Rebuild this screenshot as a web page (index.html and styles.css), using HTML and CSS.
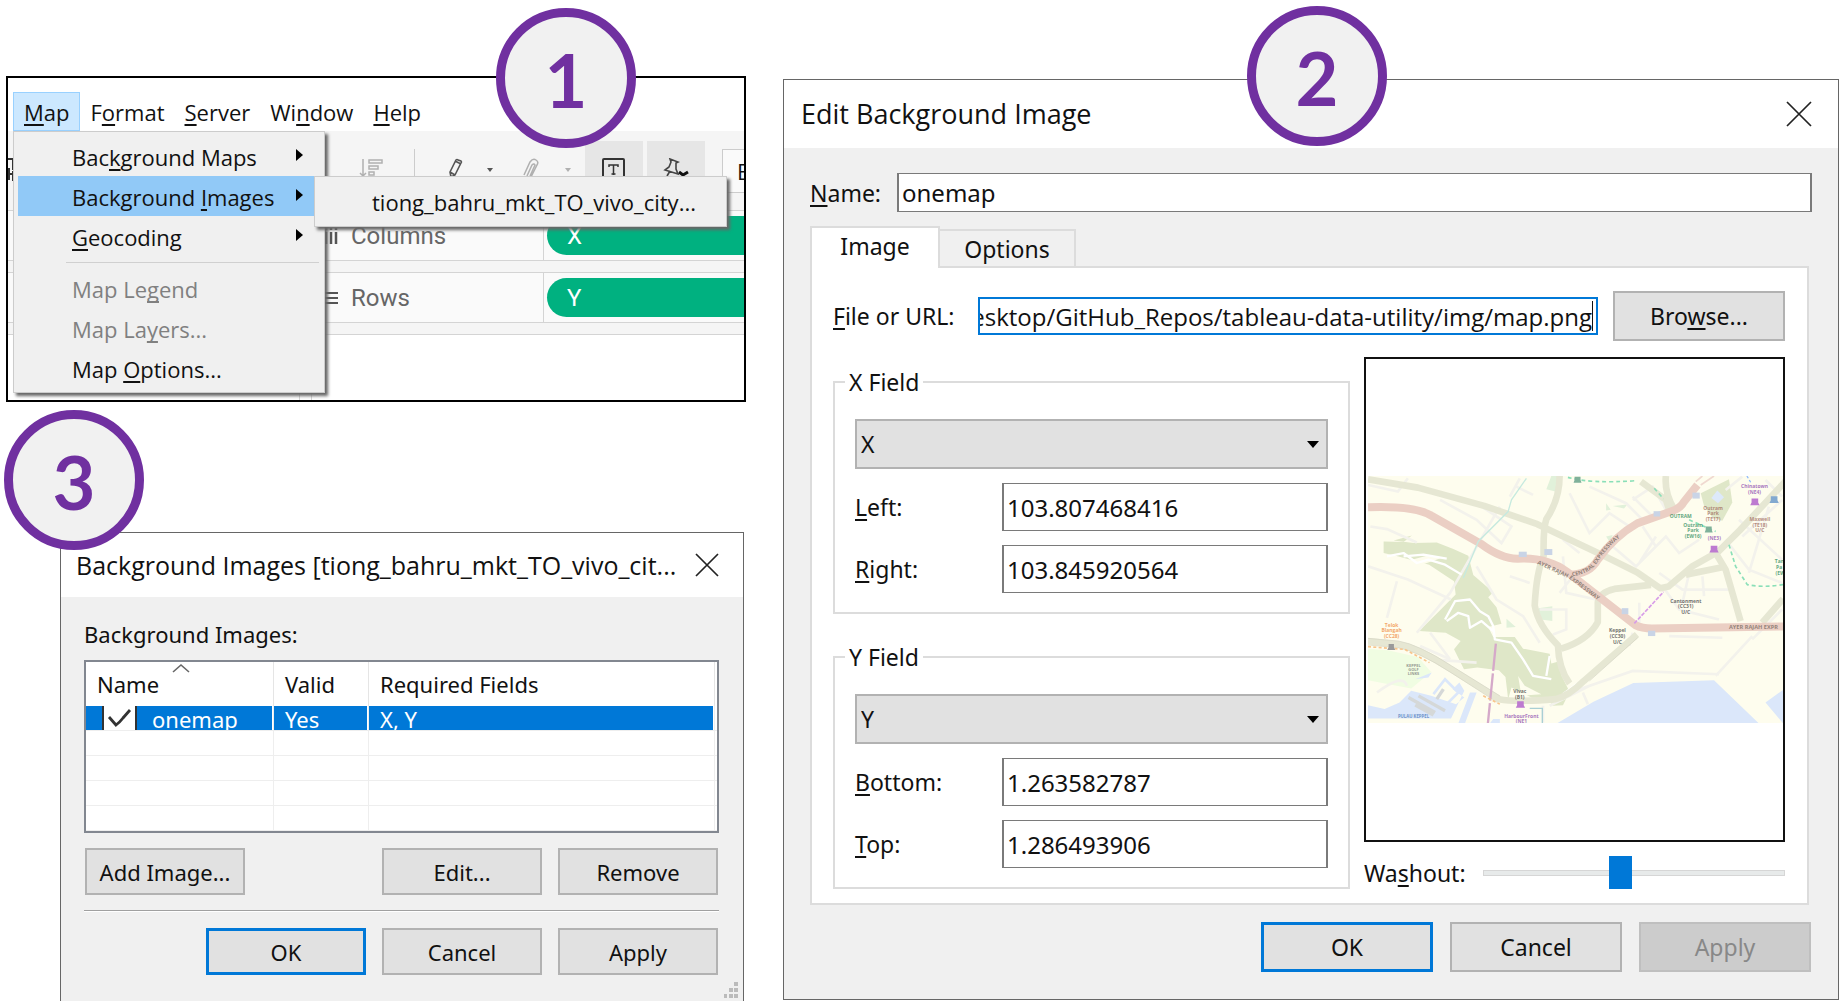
FILE: index.html
```
<!DOCTYPE html>
<html lang="en">
<head>
<meta charset="utf-8">
<title>Background image setup</title>
<link rel="stylesheet" href="styles.css">
</head>
<body>
<main class="page">
  <div class="left">
    <section class="step">
      <div class="app">
        <nav class="menubar">
          <button class="menubar-item open"><u>M</u>ap</button>
          <button class="menubar-item">F<u>o</u>rmat</button>
          <button class="menubar-item"><u>S</u>erver</button>
          <button class="menubar-item">Wi<u>n</u>dow</button>
          <button class="menubar-item"><u>H</u>elp</button>
        </nav>
        <div class="toolbar">
          <svg class="tool-edge" width="6" height="24" viewBox="0 0 6 24"><path d="M0 1h5v11M0 16h5M5 13v10M1 10v12" fill="none" stroke="#333" stroke-width="2"/></svg>
          <button class="tool tool-sort" aria-label="Sort"><svg width="26" height="24" viewBox="0 0 26 24" fill="none" stroke="#b0b0b0" stroke-width="1.5"><path d="M5 1v17M2 15l3 3 3-3"/><rect x="11" y="2" width="13" height="3"/><rect x="11" y="8" width="9" height="3"/><rect x="11" y="14" width="5" height="3"/></svg></button>
          <span class="tool-divider"></span>
          <button class="tool tool-pen" aria-label="Highlight"><svg width="18" height="24" viewBox="0 0 18 24" fill="none" stroke="#555" stroke-width="1.6"><path d="M3 14L9 2q1-1 2 0l3 1q1 1 0 2L8 17l-4 2zM3 14l5 3M8 3l6 3"/></svg><svg width="8" height="6" viewBox="0 0 8 6"><path d="M1 1h6L4 5z" fill="#555"/></svg></button>
          <button class="tool tool-clip" aria-label="Group"><svg width="20" height="24" viewBox="0 0 20 24" fill="none" stroke="#b0b0b0" stroke-width="1.5"><path d="M3 17L9 4q3-4 6-2t1 5l-6 12M6 18l5-11q2-2 3 0l-5 11"/></svg><svg width="8" height="6" viewBox="0 0 8 6"><path d="M1 1h6L4 5z" fill="#b0b0b0"/></svg></button>
          <button class="tool pressed" aria-label="Show labels"><svg width="24" height="24" viewBox="0 0 24 24" fill="none" stroke="#333"><rect x="1" y="1" width="21" height="21" rx="1" stroke-width="2"/><path d="M7 9V7h9v2M11.500 7v10M9.500 16h4" stroke-width="1.5"/></svg></button>
          <button class="tool pressed" aria-label="Pin axes"><svg width="26" height="24" viewBox="0 0 26 24" fill="none" stroke="#444" stroke-width="1.6"><path d="M7 1l8 3-2 1v6l2 5-13-4 4-3 2-5zM7 13l-3 5"/><path d="M16 14l4 3 5-3" stroke="#111" stroke-width="3"/></svg></button>
          <button class="fit">E</button>
        </div>
        <div class="shelf"><div class="shelf-name"><svg width="14" height="16" viewBox="0 0 14 16"><path d="M2 4v12M7 4v12M12 4v12M2 0v2M7 0v2M12 0v2" stroke="#555" stroke-width="2.500"/></svg>Columns</div><div class="pill">X</div></div>
        <div class="shelf"><div class="shelf-name"><svg width="14" height="16" viewBox="0 0 14 16"><path d="M0 3h14M0 8h14M0 13h14" stroke="#555" stroke-width="2"/></svg>Rows</div><div class="pill">Y</div></div>
        <div class="sheet"><div class="side"></div><div class="canvas"></div></div>
      </div>
      <div class="menu">
        <button class="menu-item">Bac<u>k</u>ground Maps<i class="arrow"></i></button>
        <button class="menu-item current">Background <u>I</u>mages<i class="arrow"></i></button>
        <button class="menu-item"><u>G</u>eocoding<i class="arrow"></i></button>
        <hr class="menu-line">
        <button class="menu-item" disabled>Map Le<u>g</u>end</button>
        <button class="menu-item" disabled>Map La<u>y</u>ers...</button>
        <button class="menu-item">Map <u>O</u>ptions...</button>
      </div>
      <div class="submenu"><button class="submenu-item">tiong_bahru_mkt_TO_vivo_city...</button></div>
      <div class="badge badge-one">1</div>
    </section>

    <section class="step list-step">
      <div class="dialog">
        <header class="titlebar small-title">
          <h2>Background Images [tiong_bahru_mkt_TO_vivo_cit...</h2>
          <button class="close" aria-label="Close"><svg width="24" height="24" viewBox="0 0 24 24"><path d="M1 1l22 22M23 1L1 23" stroke="#222" stroke-width="1.7"/></svg></button>
        </header>
        <div class="list-body">
          <p class="list-label" id="list-label">Background Images:</p>
          <table class="images" aria-labelledby="list-label">
            <colgroup><col class="col-name"><col class="col-valid"><col><col class="col-end"></colgroup>
            <thead><tr><th>Name<svg class="sort-mark" width="18" height="10" viewBox="0 0 18 10"><path d="M1 9l8-7 8 7" fill="none" stroke="#666" stroke-width="1.6"/></svg></th><th>Valid</th><th>Required Fields</th><th></th></tr></thead>
            <tbody>
              <tr class="selected"><td><div class="cell name-cell"><label class="tick"><input type="checkbox" checked aria-label="onemap"><svg width="26" height="20" viewBox="0 0 26 20"><path d="M2 9l7 8q4-3 7-7l7-8" fill="none" stroke="#333" stroke-width="2.800"/></svg></label>onemap</div></td><td><div class="cell">Yes</div></td><td><div class="cell">X, Y</div></td><td></td></tr>
              <tr><td></td><td></td><td></td><td></td></tr>
              <tr><td></td><td></td><td></td><td></td></tr>
              <tr><td></td><td></td><td></td><td></td></tr>
              <tr><td></td><td></td><td></td><td></td></tr>
            </tbody>
          </table>
          <div class="actions list-actions">
            <button class="btn first">Add Image...</button>
            <button class="btn">Edit...</button>
            <button class="btn">Remove</button>
          </div>
          <hr class="rule">
          <div class="actions">
            <button class="btn default">OK</button>
            <button class="btn">Cancel</button>
            <button class="btn">Apply</button>
          </div>
        </div>
        <svg class="grip" width="15" height="16" viewBox="0 0 15 16"><path d="M10 0h4v4h-4zM10 6h4v4h-4zM10 12h4v4h-4zM5 6h4v4H5zM5 12h4v4H5zM0 12h3v4H0z" fill="#bbb"/></svg>
      </div>
      <div class="badge badge-three">3</div>
    </section>
  </div>

  <section class="step right">
    <div class="dialog edit">
      <header class="titlebar">
        <h1>Edit Background Image</h1>
        <button class="close" aria-label="Close"><svg width="26" height="26" viewBox="0 0 26 26"><path d="M1 1l24 24M25 1L1 25" stroke="#222" stroke-width="1.7"/></svg></button>
      </header>
      <div class="edit-body">
        <div class="name-row"><label for="name"><u>N</u>ame:</label><input class="text" id="name" value="onemap"></div>
        <div class="tabs" role="tablist">
          <button class="tab active" role="tab" aria-selected="true">Image</button>
          <button class="tab" role="tab" aria-selected="false">Options</button>
        </div>
        <div class="panel">
          <div class="file-row">
            <label for="file"><u>F</u>ile or URL:</label>
            <input class="text path" id="file" dir="rtl" value="Desktop/GitHub_Repos/tableau-data-utility/img/map.png">
            <button class="btn browse">Bro<u>w</u>se...</button>
          </div>
          <div class="settings">
            <div class="fields">
              <fieldset class="group">
                <legend>X Field</legend>
                <select class="combo" aria-label="X Field"><option>X</option></select>
                <label for="l"><u>L</u>eft:</label><input class="text" id="l" value="103.807468416">
                <label for="r"><u>R</u>ight:</label><input class="text" id="r" value="103.845920564">
              </fieldset>
              <fieldset class="group">
                <legend>Y Field</legend>
                <select class="combo" aria-label="Y Field"><option>Y</option></select>
                <label for="b"><u>B</u>ottom:</label><input class="text" id="b" value="1.263582787">
                <label for="t"><u>T</u>op:</label><input class="text" id="t" value="1.286493906">
              </fieldset>
            </div>
            <div class="look">
              <div class="preview">
                <svg class="map" viewBox="53 48 1250 745" role="img" aria-label="Map preview">
                  <path fill="#fefdee" d="M53 48h1250v745H53z"/>
                  <!-- golf course and small parks -->
                  <path fill="#f0fde2" d="M53 568l60 5 90 20 40 45-60 50-130-25z"/>
                  <path fill="#e1f1da" d="M590 88l15-40h20l-8 47zM566 446l42-6v45l-35-5zM470 478l28 25-28 2zM770 130l14 20-14 2zM790 138l44-4-10 12zM770 230l20-4-10 20z"/>
                  <!-- ridge parks -->
                  <path fill="#dfe7c8" d="M130 242l60 8 70-2 50 20 45 20 15 58 60 52-15 15 25 30 15 50-40 10 15 30 65 0 25 35 80 15 5 30 35-10-5 45 25 50-20 40-30 2-15-20-50-5-60-30-10 35-8-67-20-20-65-8-40 5-30-60 20-25-45-25-80-5 60-60 50-50-5-40-75-50-95-25-42-10 0-35 60 2 25-20z"/>
                  <path fill="#dfe7c8" d="M1055 100l85-42 10 70-30 55-30-10-25-35z"/>
                  <path fill="#dde9fa" d="M1105 92l20 20-18 18-20-16z"/>
                  <path fill="#fefdee" d="M185 300l45-12 50 5-65 22zM505 650l20 30 50 25-60 5z"/>
                  <!-- sea and docks -->
                  <path fill="#dbe7fa" d="M622 793l110-65 120-57 243-8 135 130zM1250 730l53-38v101zM53 738l50 12 45-20 35-35 60 15 75 25 25-20-35-25 20-20 15 25-40 83H53zM360 700h20l-35 93h-20zM430 780h20v13h-30zM195 660l50-20-10 15z"/>
                  <path fill="none" stroke="#dbe7fa" stroke-width="8" d="M250 705l35-45 40 40-35 35"/>
                  <path fill="none" stroke="#d5d8d8" stroke-width="10" d="M175 715l80 45M205 710l80 45M195 738l55 30M260 720l20-30"/>
                  <!-- minor streets -->
                  <g fill="none" stroke="#f3f2ec" stroke-width="8">
                    <path d="M53 75l90 20 30-40M270 120l110 60 75 70 30-50-90-60M60 200l50 8 90 40M53 320l120 40 130 60M140 365l-30 110M480 110l30-55M500 80l50 25M660 100l60 120 60-60 60 40M720 80l110 50 60 60M850 120l60-40 40 70M830 130l60 60M850 110l60 60M640 240l50 40M640 290l10 110 90 20M630 400l40-50M570 450l80 0v60l-40 15M480 350l60 20M380 320l60 100 80 50 50 80M790 260l70 60 90-90 40 50 60-40M880 200l40 60M870 310l50-80M930 340l70 50 150 0M940 380l50 70 120 30M960 530l160 5M840 560l10-40M1130 240l70 90 100 40M1170 180l130 120M1180 230l120-110M1200 340l60-200M1130 90l50-40M1250 60l50 50M1210 540l90-90M1100 650l110-120M690 690l160-55 260 10M600 740l120-60M580 740v50M700 700l15 35M240 520l60 80M210 560l90 40M80 700q80-60 90-20M240 600l140 10M870 430v60M1020 340l-20 90M1060 350l5 60M200 520l100-120 150-260"/>
                  </g>
                  <g fill="none" stroke="#fff" stroke-width="7" stroke-linejoin="round">
                    <path d="M110 290l50-10 40 30 35-10 50 15 50 30M160 290l60-5 70 12M285 480l30-55 45-5 30 35 25 15 15 30 5 40 50 10 35 50 30 50 55 10M290 485l35-25 30 10 5 35 35-20 35 30M640 705l75-55M600 590l-10 60"/>
                  </g>
                  <!-- main roads -->
                  <g fill="none" stroke="#e6e7d3" stroke-width="20" stroke-linejoin="round">
                    <path d="M53 58l150 25 200 55 160 55 200 95 100 50 70 48 25-5 70-60 80-45 65-65 140-150"/>
                    <path d="M630 48q0 70-40 130-10 30-8 110-22 50-27 150 10 60 70 120 2 70 35 115M635 568q80-25 110-80v-60q5-30 50-40l110-12M1100 280l30 50 45 155M1010 345l110-22M875 65l75 55 10 30M950 48q-5 50 25 100M1240 490l63-72"/>
                    <path d="M53 545l90 10q60 10 160 75l145 90q50 10 170 0 40-10 85-55l160-140"/>
                  </g>
                  <path fill="none" stroke="#d4d5c4" stroke-width="2" d="M53 537l92 8q60 10 160 75l145 90M53 557l90 8q60 10 160 75l140 90M720 665l145-130"/>
                  <!-- expressways -->
                  <g fill="none" stroke="#ebcfc4" stroke-width="24">
                    <path d="M53 142q140-5 190 25l150 85q60 45 110 45 90-5 150 40l205 160q20 10 50 10l395-6"/>
                    <path d="M660 345q60 0 85-45 50-70 120-110l100-35q30-10 40-30l40-50"/>
                  </g>
                  <path fill="none" stroke="#f0d9d0" stroke-width="5" d="M1040 65l20-17M1055 75l40-27"/>
                  <!-- transit lines -->
                  <g fill="none" stroke-width="5">
                    <path stroke="#c6eadf" d="M530 55l-45 65-10 35-90 90-45 110" stroke-width="4"/>
                    <path stroke="#8adfb8" stroke-dasharray="12 9" d="M655 52q70 20 205 10M915 85l28 32M1140 255l20 65 35 55q50 10 108 0M1020 180l80 35"/>
                    <path stroke="#d79be8" stroke-dasharray="12 4" d="M855 492l88-95"/>
                    <path stroke="#d5a9c9" stroke-dasharray="82 8" d="M438 553l-24 240" stroke-width="7"/>
                    <path stroke="#f8c48b" stroke-dasharray="9 7" d="M53 562l110 8 75 40M400 710l50 25"/>
                    <path stroke="#a9cfd4" d="M540 748h38v45" stroke-width="4"/>
                    <path stroke="#8db9ff" stroke-dasharray="8 6" d="M1194 48l12 20" stroke-width="4"/>
                  </g>
                  <g fill="#c9d4e6"><rect x="507" y="276" width="24" height="16"/><rect x="584" y="268" width="24" height="18"/><rect x="913" y="154" width="20" height="16"/><rect x="1030" y="98" width="22" height="18"/><rect x="817" y="446" width="20" height="18"/><rect x="896" y="514" width="22" height="16"/></g>
                  <g fill="#bd7ad0"><path d="M1208 116h20v12l4 8h-28l4-8zM1085 258h20v12l4 8h-28l4-8zM502 726h20v12l4 8h-28l4-8z"/><path fill="#82a9d0" d="M1266 109h20v12l4 8h-28l4-8z"/><path fill="#7fb19a" d="M675 50h18v10l3 8h-24l3-8zM1070 200h18v10l3 8h-24l3-8z"/><path fill="#999" d="M115 554h16v10l4 8h-24l4-8z"/></g>
                  <defs><path id="aye" d="M562 312L660 358 790 455"/><path id="cte" d="M668 350Q725 342 748 302 790 240 850 210"/></defs>
                  <g class="map-text">
                    <text class="road"><textPath href="#aye">AYER RAJAH EXPRESSWAY</textPath></text>
                    <text class="road"><textPath href="#cte">CENTRAL EXPRESSWAY</textPath></text>
                    <text class="road" x="1140" y="510">AYER RAJAH EXPR</text>
                    <text class="dark" x="1010" y="430">Cantonment<tspan x="1010" y="447">(CC31)</tspan><tspan x="1010" y="464">U/C</tspan></text>
                    <text class="dark" x="804" y="519">Keppel<tspan x="804" y="536">(CC30)</tspan><tspan x="804" y="553">U/C</tspan></text>
                    <text class="orange" x="124" y="502">Telok<tspan x="124" y="519">Blangah</tspan><tspan x="124" y="536">(CC28)</tspan></text>
                    <text class="dark" x="510" y="703">Vivac<tspan x="510" y="720">(B1)</tspan></text>
                    <text class="purple" x="515" y="776">HarbourFront<tspan x="515" y="791">(NE1</tspan></text>
                    <text class="purple" x="1217" y="84">Chinatown<tspan x="1217" y="101">(NE4)</tspan></text>
                    <text class="brown" x="1233" y="184">Maxwell<tspan x="1233" y="201">(TE18)</tspan><tspan x="1233" y="218">U/C</tspan></text>
                    <text class="brown" x="1092" y="149">Outram<tspan x="1092" y="166">Park</tspan><tspan x="1092" y="183">(TE17)</tspan></text>
                    <text class="green" x="1032" y="201">Outram<tspan x="1032" y="218">Park</tspan><tspan x="1032" y="235">(EW16)</tspan></text>
                    <text class="purple" x="1096" y="242">(NE3)</text>
                    <text class="green" x="995" y="174">OUTRAM</text>
                    <text class="gray" x="190" y="624">KEPPEL<tspan x="190" y="636">GOLF</tspan><tspan x="190" y="648">LINKS</tspan></text>
                    <text class="blue" x="190" y="777">PULAU KEPPEL</text>
                    <text class="green start" x="1278" y="311">Tan<tspan x="1282" y="328">Pa</tspan><tspan x="1280" y="345">(EW</tspan></text>
                  </g>
                </svg>
              </div>
              <div class="washout"><label for="w">Wa<u>s</u>hout:</label><input id="w" type="range" min="0" max="100" value="45"></div>
            </div>
          </div>
        </div>
        <div class="actions edit-actions">
          <button class="btn default">OK</button>
          <button class="btn">Cancel</button>
          <button class="btn" disabled>Apply</button>
        </div>
      </div>
    </div>
    <div class="badge badge-two">2</div>
  </section>
</main>
</body>
</html>
```
FILE: styles.css
```
* { box-sizing: border-box; }

body {
  margin: 0;
  background: #fff;
  color: #111;
  font-family: "Noto Sans", sans-serif;
  font-size: 22px;
  line-height: 32px;
}

h1, h2, p { margin: 0; font-weight: normal; }
button, input, select { margin: 0; font: inherit; color: inherit; border-radius: 0; }
button { padding: 0; border: 0; background: none; }
svg { display: block; flex: none; }
u { text-decoration-thickness: 2px; text-underline-offset: 3px; text-decoration-skip-ink: none; }

.page {
  display: grid;
  grid-template-columns: 740fr 1056fr;
  column-gap: 37px;
  padding-left: 6px;
}
.left { min-width: 0; padding-top: 76px; }
.step { position: relative; }
.list-step { margin: 130px 2px 0 54px; }
.right { min-width: 0; padding-top: 79px; }

.badge {
  position: absolute;
  display: flex;
  align-items: center;
  justify-content: center;
  width: 140px;
  height: 140px;
  padding-top: 4px;
  border: 9px solid #7030a0;
  border-radius: 50%;
  background: #f1f1f1;
  color: #7030a0;
  font: bold 74px/74px Lato, sans-serif;
}
.badge-one { left: 490px; top: -68px; }
.badge-two { left: 464px; top: 6px; }
.badge-three { left: -56px; top: -122px; }

/* application window */
.app { overflow: hidden; border: 2px solid #000; font-family: "Open Sans", sans-serif; }
.menubar { display: flex; height: 53px; padding: 14px 0 0 5px; }
.menubar-item { padding: 1px 9px 0; border: 1px solid transparent; }
.menubar-item.open { padding: 1px 10px 0; background: #cce8ff; border-color: #99d1ff; }

.toolbar {
  display: flex;
  align-items: flex-start;
  height: 79px;
  background: #f5f5f5;
  padding-top: 10px;
}
.tool { display: flex; align-items: center; justify-content: center; height: 58px; }
.tool-edge { margin-top: 17px; }
.tool-sort { margin-left: 344px; }
.tool-divider { width: 1px; height: 44px; margin: 8px 32px 0 30px; background: #ccc; }
.tool-pen { gap: 21px; }
.tool-clip { gap: 23px; margin: 0 13px 0 27px; }
.pressed { width: 58px; margin-right: 4px; background: #e6e6e6; }
.fit {
  flex: 1;
  min-width: 0;
  height: 44px;
  margin: 8px 0 0 13px;
  padding-left: 14px;
  overflow: hidden;
  border: 1px solid #ccc;
  border-right: 0;
  background: #fafafa;
  text-align: left;
}
.shelf {
  display: flex;
  height: 51px;
  margin-bottom: 11px;
  border: solid #d4d4d4;
  border-width: 1px 0;
  background: #fafafa;
  box-shadow: 0 11px #f5f5f5;
}
.shelf-name {
  display: flex;
  align-items: center;
  gap: 13px;
  width: 536px;
  padding-left: 316px;
  border-right: 1px solid #d4d4d4;
  color: #666;
  font: 24px/32px Roboto, sans-serif;
}
.pill {
  flex: 1;
  height: 39px;
  margin: 5px 0 0 3px;
  padding: 4px 0 0 20px;
  border-radius: 20px 0 0 20px;
  background: #00b180;
  color: #fff;
  font: 24px/32px Roboto, sans-serif;
}
.sheet { display: flex; gap: 11px; height: 66px; border-top: 1px solid #d4d4d4; }
.side { width: 292px; border-right: 1px solid #d4d4d4; }
.canvas { flex: 1; border-left: 1px solid #d4d4d4; }

.menu, .submenu {
  position: absolute;
  border: 1px solid #ccc;
  background: #f0f0f0;
  box-shadow: 3px 3px 3px #666;
  font-family: "Open Sans", sans-serif;
}
.menu { left: 7px; top: 55px; width: 312px; padding: 4px 5px 4px 4px; }
.menu-item {
  display: block;
  position: relative;
  width: 100%;
  height: 40px;
  padding: 1px 17px 0 54px;
  text-align: left;
  white-space: nowrap;
}
.menu-item.current { background: #91c9f7; }
.menu-item:disabled { color: #808080; }
.arrow {
  position: absolute;
  right: 16px;
  top: 13px;
  border: solid transparent;
  border-width: 6px 0 6px 7px;
  border-left-color: #000;
}
.menu-line { height: 1px; margin: 6px 0 5px 48px; border: 0; background: #d0d0d0; }
.submenu { left: 308px; top: 100px; width: 413px; padding: 4px; }
.submenu-item { width: 100%; height: 41px; padding-left: 53px; text-align: left; }

/* dialogs */
.dialog { position: relative; border: 1px solid #666; background: #f0f0f0; }
.titlebar {
  display: flex;
  align-items: center;
  justify-content: space-between;
  height: 68px;
  padding: 0 26px 0 17px;
  background: #fff;
  font-family: "Open Sans", sans-serif;
}
.titlebar h1 { font-size: 27px; }
.titlebar h2 { font-size: 25px; white-space: nowrap; }
.small-title { height: 64px; padding: 0 24px 0 15px; }

.btn {
  width: 160px;
  height: 47px;
  border: 2px solid #b2b2b2;
  background: #e1e1e1;
  text-align: center;
}
.btn.default { border: 3px solid #0078d7; }
.btn:disabled { border-color: #bfbfbf; background: #ccc; color: #888; }
.actions { display: flex; justify-content: flex-end; gap: 16px; padding: 0 1px; }

.list-body { padding: 21px 24px 26px 23px; }
.images {
  width: 100%;
  margin-top: 10px;
  border: 2px solid #828790;
  border-collapse: separate;
  border-spacing: 0;
  background: #fff;
  table-layout: fixed;
}
.col-name { width: 188px; }
.col-valid { width: 95px; }
.col-end { width: 2px; }
.images th {
  position: relative;
  height: 44px;
  padding: 0 0 0 11px;
  border-right: 1px solid #e5e5e5;
  font-weight: normal;
  text-align: left;
}
.images td {
  height: 25px;
  padding: 0;
  border-right: 1px solid #eee;
  border-bottom: 1px solid #eee;
}
.images th:last-child, .images td:last-child { padding: 0; border-right: 0; }
.sort-mark { position: absolute; left: 86px; top: 1px; }
.cell {
  display: flex;
  height: 24px;
  margin-right: 1px;
  padding-left: 11px;
  overflow: hidden;
  background: #0078d7;
  color: #fff;
  line-height: 26px;
}
.name-cell { gap: 15px; padding-left: 16px; }
.tick { display: flex; width: 35px; padding: 2px 3px; border: solid #333; border-width: 0 2px; background: #fff; }
.tick input { position: absolute; opacity: 0; }
.list-actions { margin-top: 15px; }
.first { margin-right: auto; }
.rule { height: 2px; margin: 15px 0 16px; border: 0; border-top: 1px solid #a0a0a0; background: #fff; }
.grip { position: absolute; right: 4px; bottom: 3px; }

.edit { font-size: 23px; }
.edit-body { padding: 25px 26px 27px; }
.text {
  min-width: 0;
  height: 48px;
  padding: 0 3px;
  border: 2px solid #7a7a7a;
  border-width: 1px 2px;
  background: #fff;
  font-size: 24px;
}
.name-row { display: grid; grid-template-columns: 87px 1fr; align-items: center; }
.name-row .text { height: 39px; }
.tabs { display: flex; align-items: flex-end; margin-top: 14px; }
.tab {
  position: relative;
  width: 136px;
  height: 37px;
  border: 2px solid #dcdcdc;
  border-width: 2px 2px 0 0;
}
.tab.active { z-index: 1; width: 130px; height: 42px; margin-bottom: -2px; padding-bottom: 4px; border-width: 2px 2px 0; background: #fff; }
.panel { margin-right: 3px; padding: 23px 22px 14px 21px; border: 2px solid #dcdcdc; background: #fff; }
.file-row { display: grid; grid-template-columns: 145px 1fr 172px; align-items: center; }
.path {
  height: 38px;
  margin-right: 15px;
  padding: 0 4px 0 0;
  border: 2px solid #0078d7;
  background: linear-gradient(#111, #111) right 3px center / 1px 30px no-repeat #fff;
  font-family: "Open Sans", sans-serif;
}
.browse, .edit-actions .btn { width: 172px; height: 50px; }
.settings { display: grid; grid-template-columns: 518fr 422fr; column-gap: 14px; margin-top: 16px; }
.fields { display: flex; flex-direction: column; gap: 27px; min-width: 0; padding-top: 9px; }
.group {
  display: grid;
  grid-template-columns: 147px 1fr;
  align-items: center;
  row-gap: 14px;
  min-width: 0;
  margin: 0;
  padding: 21px 20px 19px;
  border: 2px solid #dcdcdc;
}
.group legend { margin-left: -10px; padding: 0 4px; }
.combo {
  grid-column: 1 / 3;
  height: 50px;
  padding: 0 4px;
  border: 2px solid #b2b2b2;
  appearance: none;
  background: #e1e1e1 url("data:image/svg+xml,%3Csvg xmlns='http://www.w3.org/2000/svg' width='12' height='7'%3E%3Cpath d='M0 0h12L6 7z'/%3E%3C/svg%3E") right 7px center no-repeat;
}
.look { display: flex; flex-direction: column; gap: 14px; }
.preview { flex: 1; display: flex; align-items: center; padding-left: 2px; border: 2px solid #111; }
.map { width: 100%; flex: 0 1 auto; }
.map-text { font: bold 15px "Open Sans", sans-serif; text-anchor: middle; opacity: .75; }
.road { fill: #776a62; font-size: 17px; text-anchor: start; }
.start { text-anchor: start; }
.dark { fill: #444; }
.gray { fill: #777; font-size: 12px; }
.orange { fill: #f08a3c; }
.purple { fill: #8d4bb0; }
.brown { fill: #a06a5c; }
.green { fill: #2c8a5a; }
.blue { fill: #4a77b8; font-size: 13px; }
.washout { display: grid; grid-template-columns: 119px 1fr; align-items: center; height: 33px; }
.washout input { width: 100%; min-width: 0; height: 33px; appearance: none; background: none; }
.washout input::-webkit-slider-runnable-track { height: 6px; border: 1px solid #d6d6d6; background: #e7eaea; }
.washout input::-webkit-slider-thumb { width: 23px; height: 33px; margin-top: -15px; appearance: none; background: #0078d7; }
.edit-actions { gap: 17px; margin-top: 17px; }
```
